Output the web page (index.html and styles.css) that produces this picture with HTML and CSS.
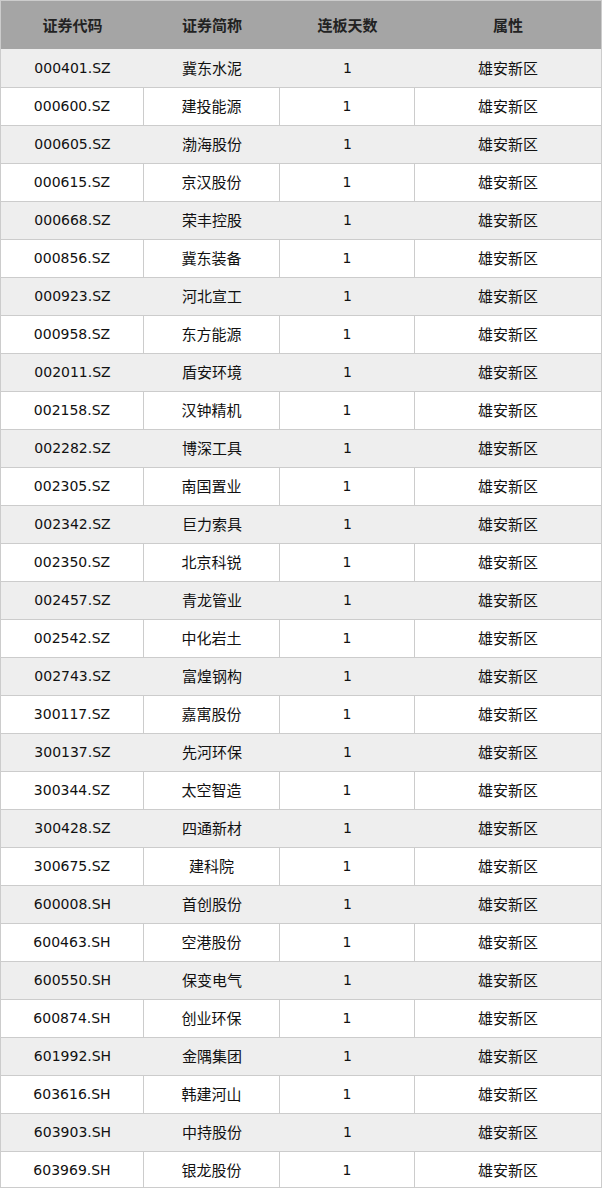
FILE: index.html
```html
<!DOCTYPE html>
<html lang="zh-CN">
<head>
<meta charset="utf-8">
<title>雄安新区</title>
<link rel="stylesheet" href="styles.css">
</head>
<body>
<div class="frame">
  <div class="row head">
    <div class="cell">证券代码</div>
    <div class="cell">证券简称</div>
    <div class="cell">连板天数</div>
    <div class="cell">属性</div>
  </div>
  <div class="row odd first"><div class="cell code">000401.SZ</div><div class="cell name">冀东水泥</div><div class="cell code">1</div><div class="cell name">雄安新区</div></div>
  <div class="row even"><div class="cell code">000600.SZ</div><div class="cell name">建投能源</div><div class="cell code">1</div><div class="cell name">雄安新区</div></div>
  <div class="row odd"><div class="cell code">000605.SZ</div><div class="cell name">渤海股份</div><div class="cell code">1</div><div class="cell name">雄安新区</div></div>
  <div class="row even"><div class="cell code">000615.SZ</div><div class="cell name">京汉股份</div><div class="cell code">1</div><div class="cell name">雄安新区</div></div>
  <div class="row odd"><div class="cell code">000668.SZ</div><div class="cell name">荣丰控股</div><div class="cell code">1</div><div class="cell name">雄安新区</div></div>
  <div class="row even"><div class="cell code">000856.SZ</div><div class="cell name">冀东装备</div><div class="cell code">1</div><div class="cell name">雄安新区</div></div>
  <div class="row odd"><div class="cell code">000923.SZ</div><div class="cell name">河北宣工</div><div class="cell code">1</div><div class="cell name">雄安新区</div></div>
  <div class="row even"><div class="cell code">000958.SZ</div><div class="cell name">东方能源</div><div class="cell code">1</div><div class="cell name">雄安新区</div></div>
  <div class="row odd"><div class="cell code">002011.SZ</div><div class="cell name">盾安环境</div><div class="cell code">1</div><div class="cell name">雄安新区</div></div>
  <div class="row even"><div class="cell code">002158.SZ</div><div class="cell name">汉钟精机</div><div class="cell code">1</div><div class="cell name">雄安新区</div></div>
  <div class="row odd"><div class="cell code">002282.SZ</div><div class="cell name">博深工具</div><div class="cell code">1</div><div class="cell name">雄安新区</div></div>
  <div class="row even"><div class="cell code">002305.SZ</div><div class="cell name">南国置业</div><div class="cell code">1</div><div class="cell name">雄安新区</div></div>
  <div class="row odd"><div class="cell code">002342.SZ</div><div class="cell name">巨力索具</div><div class="cell code">1</div><div class="cell name">雄安新区</div></div>
  <div class="row even"><div class="cell code">002350.SZ</div><div class="cell name">北京科锐</div><div class="cell code">1</div><div class="cell name">雄安新区</div></div>
  <div class="row odd"><div class="cell code">002457.SZ</div><div class="cell name">青龙管业</div><div class="cell code">1</div><div class="cell name">雄安新区</div></div>
  <div class="row even"><div class="cell code">002542.SZ</div><div class="cell name">中化岩土</div><div class="cell code">1</div><div class="cell name">雄安新区</div></div>
  <div class="row odd"><div class="cell code">002743.SZ</div><div class="cell name">富煌钢构</div><div class="cell code">1</div><div class="cell name">雄安新区</div></div>
  <div class="row even"><div class="cell code">300117.SZ</div><div class="cell name">嘉寓股份</div><div class="cell code">1</div><div class="cell name">雄安新区</div></div>
  <div class="row odd"><div class="cell code">300137.SZ</div><div class="cell name">先河环保</div><div class="cell code">1</div><div class="cell name">雄安新区</div></div>
  <div class="row even"><div class="cell code">300344.SZ</div><div class="cell name">太空智造</div><div class="cell code">1</div><div class="cell name">雄安新区</div></div>
  <div class="row odd"><div class="cell code">300428.SZ</div><div class="cell name">四通新材</div><div class="cell code">1</div><div class="cell name">雄安新区</div></div>
  <div class="row even"><div class="cell code">300675.SZ</div><div class="cell name">建科院</div><div class="cell code">1</div><div class="cell name">雄安新区</div></div>
  <div class="row odd"><div class="cell code">600008.SH</div><div class="cell name">首创股份</div><div class="cell code">1</div><div class="cell name">雄安新区</div></div>
  <div class="row even"><div class="cell code">600463.SH</div><div class="cell name">空港股份</div><div class="cell code">1</div><div class="cell name">雄安新区</div></div>
  <div class="row odd"><div class="cell code">600550.SH</div><div class="cell name">保变电气</div><div class="cell code">1</div><div class="cell name">雄安新区</div></div>
  <div class="row even"><div class="cell code">600874.SH</div><div class="cell name">创业环保</div><div class="cell code">1</div><div class="cell name">雄安新区</div></div>
  <div class="row odd"><div class="cell code">601992.SH</div><div class="cell name">金隅集团</div><div class="cell code">1</div><div class="cell name">雄安新区</div></div>
  <div class="row even"><div class="cell code">603616.SH</div><div class="cell name">韩建河山</div><div class="cell code">1</div><div class="cell name">雄安新区</div></div>
  <div class="row odd"><div class="cell code">603903.SH</div><div class="cell name">中持股份</div><div class="cell code">1</div><div class="cell name">雄安新区</div></div>
  <div class="row even"><div class="cell code">603969.SH</div><div class="cell name">银龙股份</div><div class="cell code">1</div><div class="cell name">雄安新区</div></div>
</div>
</body>
</html>
```

FILE: styles.css
```css
html, body {
  margin: 0;
  padding: 0;
  background: #ffffff;
}

body {
  font-family: "Noto Sans CJK SC", "DejaVu Sans", sans-serif;
  color: #222222;
  overflow: hidden;
}

.frame {
  width: 602px;
  height: 1188px;
  box-sizing: border-box;
  border: 1px solid #cccccc;
  overflow: hidden;
}

.row {
  display: grid;
  grid-template-columns: 143px 136px 135px 186px;
  height: 38px;
  box-sizing: border-box;
  border-bottom: 1px solid #cccccc;
}

.row.first {
  height: 39px;
  border-top: 1px solid #eeeeee;
}

.row.head {
  height: 48px;
  border-bottom: none;
  background: #a5a5a5;
}

.cell {
  display: flex;
  align-items: center;
  justify-content: center;
  box-sizing: border-box;
  font-size: 15px;
  line-height: 1;
  white-space: nowrap;
}

.head .cell {
  font-weight: bold;
  color: #222222;
  padding-bottom: 2px;
}

.even {
  background: #ffffff;
}

.even .cell {
  border-right: 1px solid #cccccc;
}

.even .cell:last-child {
  border-right: none;
}

.odd {
  background: #eeeeee;
}

.code {
  font-family: "DejaVu Sans", sans-serif;
  font-size: 14px;
  color: #111111;
  padding-bottom: 1px;
}

.name {
  font-family: "Noto Sans CJK SC", sans-serif;
  font-size: 15px;
  color: #111111;
  padding-bottom: 3px;
}
```
